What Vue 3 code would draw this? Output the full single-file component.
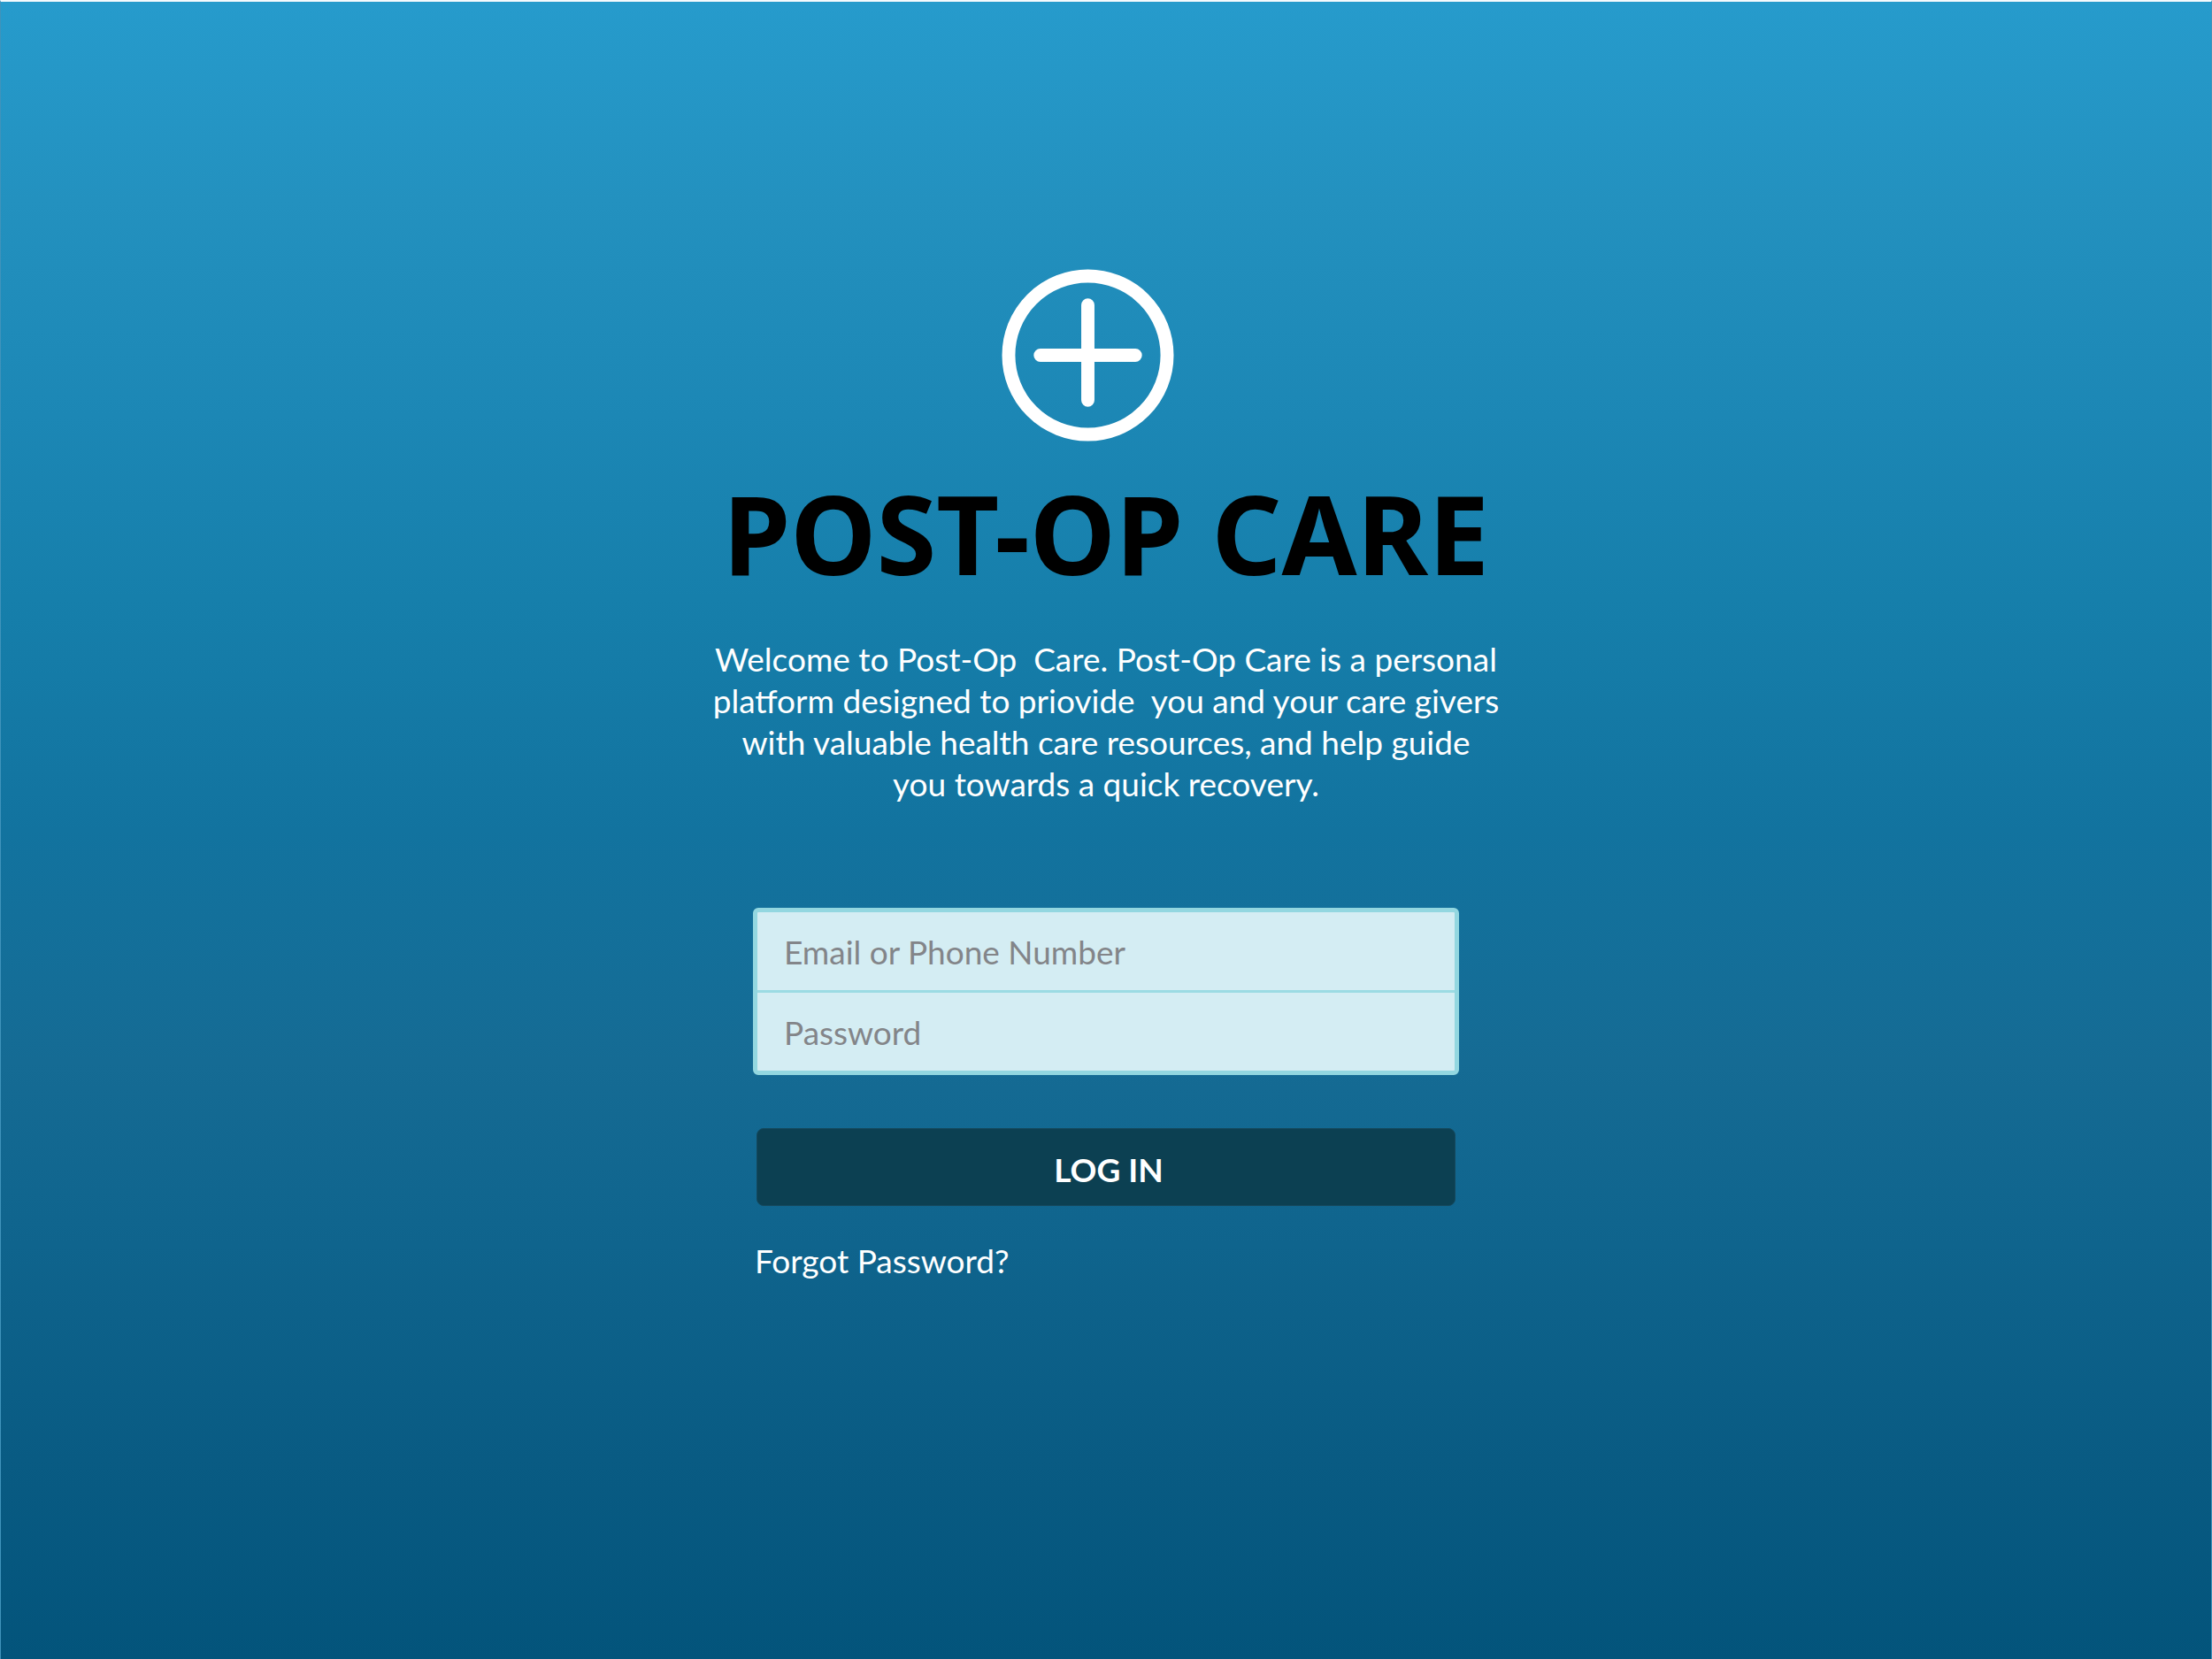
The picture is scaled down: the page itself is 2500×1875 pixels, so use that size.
<script setup>
import { ref } from 'vue'

const account = ref('')
const password = ref('')

const welcome = [
  'Welcome to Post-Op\u00a0 Care. Post-Op Care is a personal',
  'platform designed to priovide\u00a0 you and your care givers',
  'with valuable health care resources, and help guide',
  'you towards a quick recovery.'
]
</script>

<template>
  <main class="page">
    <svg class="logo" viewBox="0 0 196 196" aria-hidden="true">
      <circle cx="98" cy="98" r="90" />
      <path d="M98 41v108M44 98h108" />
    </svg>

    <h1 class="title">POST-OP CARE</h1>

    <p class="welcome">
      <span v-for="line in welcome" :key="line" class="line">{{ line }}</span>
    </p>

    <form class="login" @submit.prevent>
      <div class="fields">
        <input v-model="account" class="field" type="text" placeholder="Email or Phone Number" aria-label="Email or Phone Number" />
        <input v-model="password" class="field" type="password" placeholder="Password" aria-label="Password" />
      </div>
      <button class="submit" type="submit">LOG IN</button>
      <a class="forgot" href="#">Forgot Password?</a>
    </form>
  </main>
</template>

<style>
body {
  background: #04547c;
}
</style>

<style scoped>
.page {
  box-sizing: border-box;
  min-height: 100vh;
  padding: 302px 32px 64px;
  border: solid;
  border-width: 2px 1px 0;
  border-color: #f4fafd #3f93bb;
  background: linear-gradient(
    #269bcc 0%,
    #2391bf 12%,
    #1c87b5 25%,
    #167fab 36%,
    #12739f 50%,
    #156b94 64%,
    #0f648d 75%,
    #095b83 88%,
    #03547b 100%
  );
  display: flex;
  flex-direction: column;
  align-items: center;
  font-family: Lato, "Noto Sans", sans-serif;
  font-size: 37px;
  line-height: 47px;
  color: #fff;
}

.logo {
  width: 195px;
  height: 195px;
  margin-right: 41px;
  fill: none;
  stroke: #fff;
  stroke-width: 15;
  stroke-linecap: round;
}

.title {
  margin: 32px 0 0;
  font-family: "Noto Sans", sans-serif;
  font-size: 123px;
  line-height: 144px;
  font-weight: 700;
  color: #000;
}

.welcome {
  margin: 46px 0 0;
  text-align: center;
}

.line {
  display: block;
}

.login {
  width: 100%;
  max-width: 798px;
  margin-top: 117px;
  display: flex;
  flex-direction: column;
}

.fields {
  border: 5px solid #93d7e0;
  border-radius: 6px;
  background: #d4edf3;
  display: flex;
  flex-direction: column;
}

.field {
  box-sizing: border-box;
  width: 100%;
  height: 88px;
  padding: 0 30px;
  border: 0;
  background: transparent;
  font: inherit;
  color: #4d4f52;
}

.field + .field {
  height: 91px;
  border-top: 3px solid #9bdbe3;
}

.field::placeholder {
  color: #838589;
  opacity: 1;
}

.submit {
  height: 88px;
  margin: 60px 4px 0;
  padding: 4px 0 0 6px;
  border: 1px solid #15485c;
  border-radius: 8px;
  background: #0c4052;
  font: inherit;
  font-weight: 700;
  color: #fff;
}

.forgot {
  align-self: flex-start;
  margin: 38px 0 0 2px;
  color: #fff;
  text-decoration: none;
}
</style>
